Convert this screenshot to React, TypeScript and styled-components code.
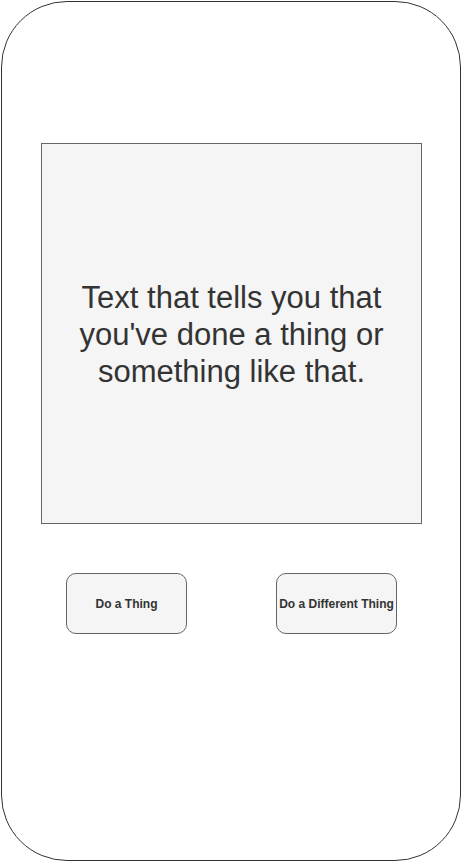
import React from "react";
import styled, { createGlobalStyle } from "styled-components";

const Global = createGlobalStyle`
  html, body { margin: 0; padding: 0; background: #ffffff; }
  body { font-family: "Liberation Sans", Arial, Helvetica, sans-serif; }
  #root { padding: 1px 0 0 1px; }
`;

const Phone = styled.div`
  box-sizing: border-box;
  width: 460px;
  height: 860px;
  border: 1px solid #333333;
  border-radius: 66px;
  background: #ffffff;
  display: flex;
  flex-direction: column;
  align-items: flex-start;
  padding: 141px 0 0 39px;
`;

const MessageBox = styled.div`
  box-sizing: border-box;
  width: 381px;
  height: 381px;
  border: 1px solid #666666;
  background: #f5f5f5;
  display: flex;
  align-items: center;
  justify-content: center;
  padding: 2px 16px 0;
`;

const Message = styled.p`
  margin: 0;
  text-align: center;
  color: #333333;
  font-size: 31px;
  line-height: 37px;
  font-family: "Liberation Sans", Arial, Helvetica, sans-serif;
`;

const ButtonRow = styled.div`
  display: flex;
  gap: 89px;
  margin: 49px 0 0 25px;
`;

const ActionButton = styled.button`
  box-sizing: border-box;
  width: 121px;
  height: 61px;
  border: 1px solid #666666;
  border-radius: 10px;
  background: #f5f5f5;
  color: #333333;
  font-family: "Liberation Sans", Arial, Helvetica, sans-serif;
  font-weight: bold;
  font-size: 12px;
  padding: 0;
  white-space: nowrap;
  display: flex;
  align-items: center;
  justify-content: center;
`;

export default function App() {
  return (
    <>
      <Global />
      <Phone>
        <MessageBox>
          <Message>
            Text that tells you that you've done a thing or something like that.
          </Message>
        </MessageBox>
        <ButtonRow>
          <ActionButton>Do a Thing</ActionButton>
          <ActionButton>Do a Different Thing</ActionButton>
        </ButtonRow>
      </Phone>
    </>
  );
}
